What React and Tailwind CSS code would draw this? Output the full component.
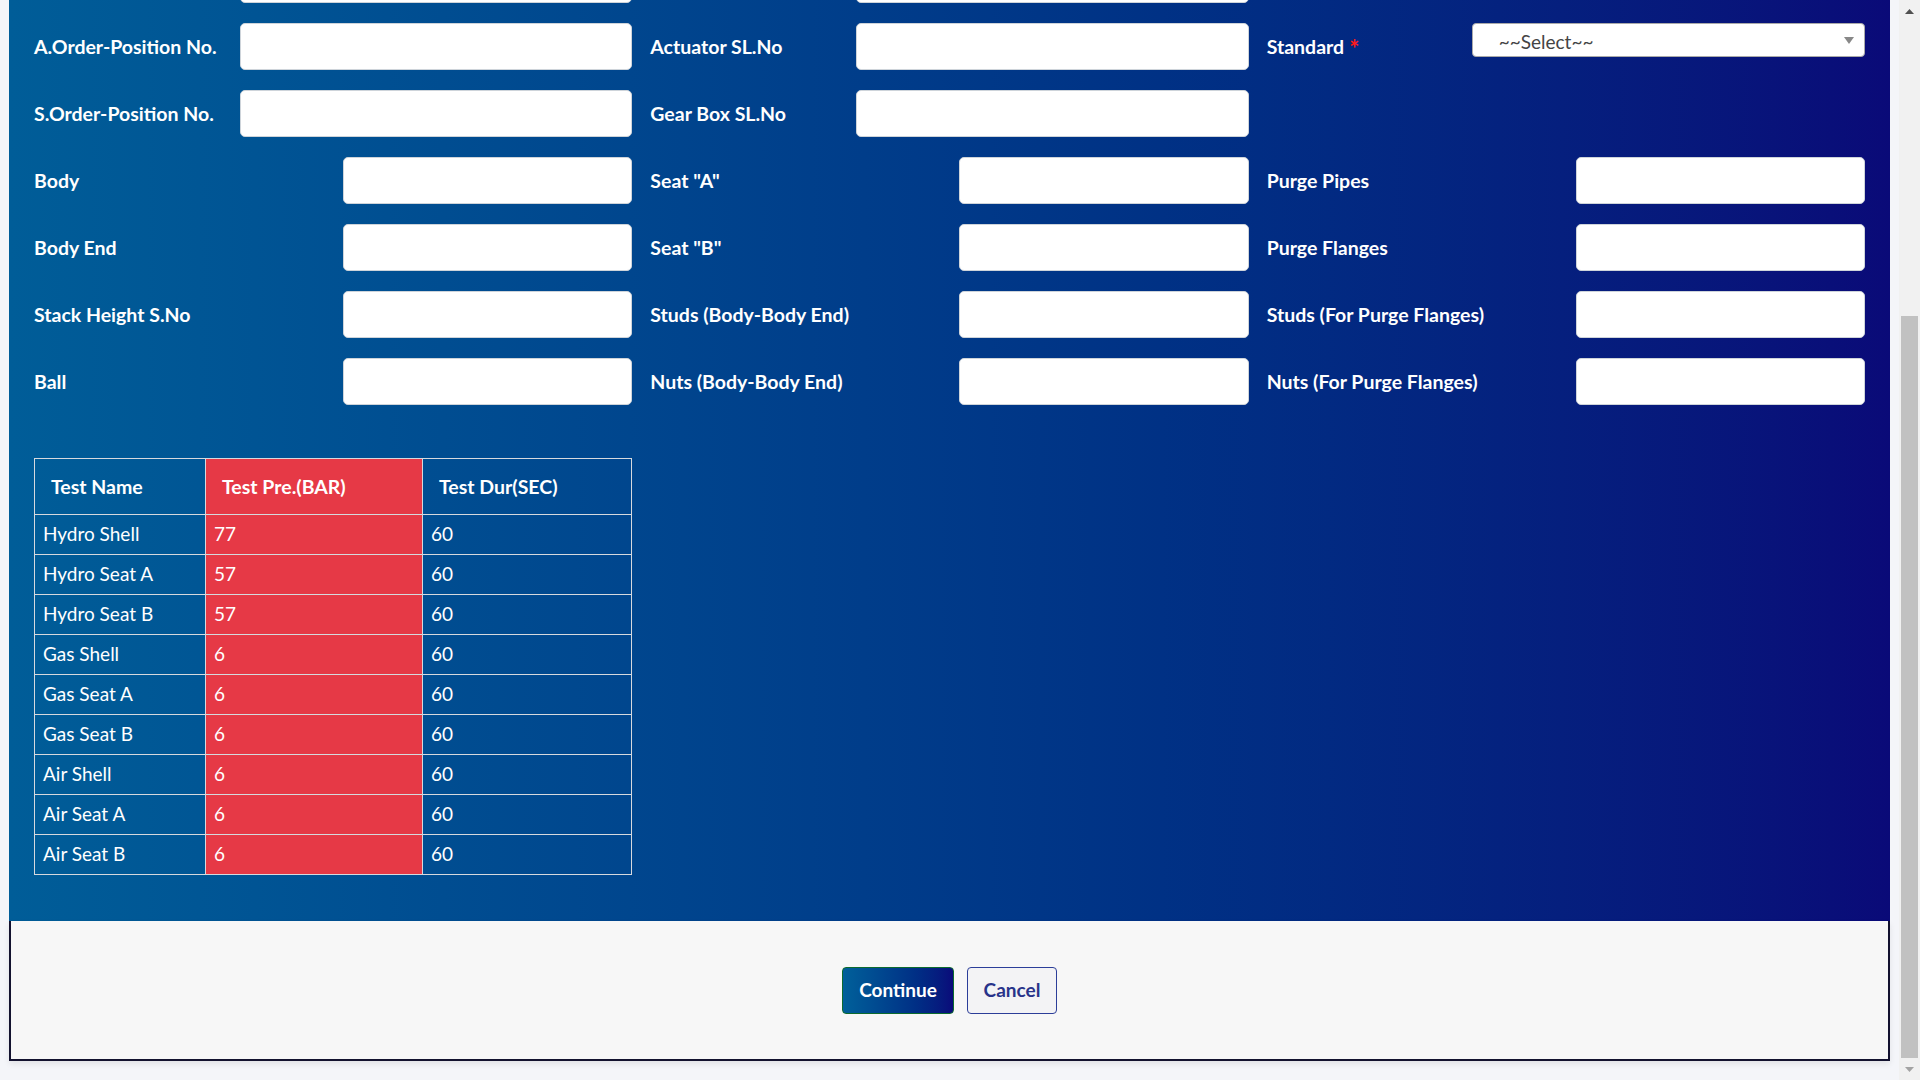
const tests = [
  { name: 'Hydro Shell', pressure: 77, duration: 60 },
  { name: 'Hydro Seat A', pressure: 57, duration: 60 },
  { name: 'Hydro Seat B', pressure: 57, duration: 60 },
  { name: 'Gas Shell', pressure: 6, duration: 60 },
  { name: 'Gas Seat A', pressure: 6, duration: 60 },
  { name: 'Gas Seat B', pressure: 6, duration: 60 },
  { name: 'Air Shell', pressure: 6, duration: 60 },
  { name: 'Air Seat A', pressure: 6, duration: 60 },
  { name: 'Air Seat B', pressure: 6, duration: 60 },
];

const partRows = [
  ['Body', 'Seat "A"', 'Purge Pipes'],
  ['Body End', 'Seat "B"', 'Purge Flanges'],
  ['Stack Height S.No', 'Studs (Body-Body End)', 'Studs (For Purge Flanges)'],
  ['Ball', 'Nuts (Body-Body End)', 'Nuts (For Purge Flanges)'],
];

const TextInput = () => (
  <input
    type="text"
    className="h-[47px] min-w-0 flex-1 rounded-[5px] border border-[#ced4da] bg-white px-3 text-[18px] text-[#333] outline-none"
  />
);

const Field = ({ label, wide }) => (
  <div className="flex items-center">
    <label className={`${wide ? 'w-[309px]' : 'w-[206px]'} shrink-0 text-[19.5px] font-bold leading-none text-white`}>
      {label}
    </label>
    <TextInput />
  </div>
);

const StandardSelect = () => (
  <div className="flex items-start">
    <label className="flex h-[47px] w-[205px] shrink-0 items-center text-[19.5px] font-bold text-white">
      Standard<span className="ml-[5px] mt-[4px] text-[24px] leading-none text-[#ff1a1a]">*</span>
    </label>
    <div className="relative flex h-[34px] flex-1 items-center rounded-[4px] border border-[#aaaaaa] bg-white pl-[26px] pt-[5px] text-[19px] text-[#444]">
      ~~Select~~
      <svg className="absolute right-[10px] top-[13px]" width="10" height="7" viewBox="0 0 10 7">
        <path d="M0 0h10L5 7z" fill="#888" />
      </svg>
    </div>
  </div>
);

const TestTable = () => (
  <table className="mt-[53px] w-[598px] border-collapse text-[19px] text-white">
    <thead>
      <tr className="h-[56px]">
        <th className="w-[171px] border border-[#d6d9de] px-4 text-left text-[19.5px] font-bold">Test Name</th>
        <th className="w-[217px] border border-[#d6d9de] bg-[#e63946] px-4 text-left text-[19.5px] font-bold">Test Pre.(BAR)</th>
        <th className="border border-[#d6d9de] px-4 text-left text-[19.5px] font-bold">Test Dur(SEC)</th>
      </tr>
    </thead>
    <tbody>
      {tests.map((t) => (
        <tr key={t.name} className="h-[40px]">
          <td className="border border-[#d6d9de] px-2">{t.name}</td>
          <td className="border border-[#d6d9de] bg-[#e63946] px-2">{t.pressure}</td>
          <td className="border border-[#d6d9de] px-2">{t.duration}</td>
        </tr>
      ))}
    </tbody>
  </table>
);

const Scrollbar = () => (
  <div className="flex w-[21px] shrink-0 flex-col bg-[#f1f1f1]">
    <div className="flex h-[22px] items-center justify-center">
      <svg width="9" height="5" viewBox="0 0 9 5">
        <path d="M0 5h9L4.5 0z" fill="#505050" />
      </svg>
    </div>
    <div className="flex flex-1 flex-col px-[2px]">
      <div className="mt-[294px] flex-1 bg-[#c1c1c1]" />
    </div>
    <div className="flex h-[22px] items-center justify-center">
      <svg width="9" height="5" viewBox="0 0 9 5">
        <path d="M0 0h9L4.5 5z" fill="#a3a3a3" />
      </svg>
    </div>
  </div>
);

export default function App() {
  return (
    <div className="flex h-[1080px] w-full overflow-hidden bg-[#f4f5f9] font-['Lato',sans-serif]">
      <div className="min-w-0 flex-1 pl-[9px] pr-[9px]">
        <div className="-mt-[64px] flex flex-col">
          <section className="bg-gradient-to-r from-[#005d98] to-[#0a0a78] pb-[46px] pl-[25px] pr-[25px] pt-[20px]">
            <div className="grid grid-cols-3 gap-x-[18px] gap-y-[20px]">
              <Field label="" />
              <Field label="" />
              <div />

              <Field label="A.Order-Position No." />
              <Field label="Actuator SL.No" />
              <StandardSelect />

              <Field label="S.Order-Position No." />
              <Field label="Gear Box SL.No" />
              <div />

              {partRows.map((row) =>
                row.map((label) => <Field key={label} label={label} wide />)
              )}
            </div>
            <TestTable />
          </section>
          <footer className="flex h-[140px] items-center justify-center gap-[13px] border-x-2 border-b-2 border-[#13122f] bg-[#f7f7f7] shadow-[0_3px_6px_rgba(0,0,0,0.08)]">
            <button className="h-[47px] w-[112px] rounded-[4px] border border-[#0d6b2e] bg-gradient-to-r from-[#00609a] to-[#0a0a7a] text-[19px] font-bold text-white">
              Continue
            </button>
            <button className="h-[47px] w-[90px] rounded-[4px] border border-[#2c3e99] bg-[#f3f3f5] text-[19px] font-bold text-[#28338a]">
              Cancel
            </button>
          </footer>
        </div>
      </div>
      <Scrollbar />
    </div>
  );
}
